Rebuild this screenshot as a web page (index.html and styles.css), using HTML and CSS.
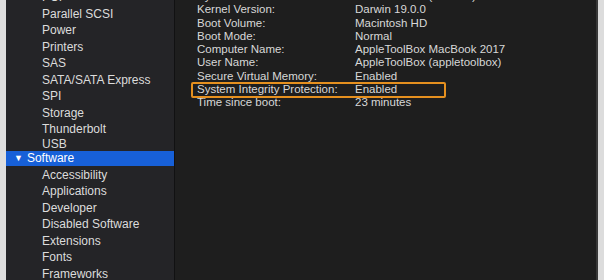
FILE: index.html
```html
<!DOCTYPE html>
<html lang="en">
<head>
    <meta charset="UTF-8">
    <meta name="viewport" content="width=device-width, initial-scale=1.0">
    <title>System Information</title>
    <link rel="stylesheet" href="styles.css">
</head>
<body>
    <div class="window">
        <div class="edge-left"></div>
        <div class="sidebar">
            <ul class="tree">
                <li>PCI</li>
                <li>Parallel SCSI</li>
                <li>Power</li>
                <li>Printers</li>
                <li>SAS</li>
                <li>SATA/SATA Express</li>
                <li>SPI</li>
                <li>Storage</li>
                <li>Thunderbolt</li>
                <li class="short">USB</li>
                <li class="group selected"><span class="arrow">&#9660;</span>Software</li>
                <li>Accessibility</li>
                <li>Applications</li>
                <li>Developer</li>
                <li>Disabled Software</li>
                <li>Extensions</li>
                <li>Fonts</li>
                <li>Frameworks</li>
            </ul>
        </div>
        <div class="content">
            <div class="details">
                <div class="row"><span class="label">System Version:</span><span>macOS 10.15 (19A583)</span></div>
                <div class="row"><span class="label">Kernel Version:</span><span>Darwin 19.0.0</span></div>
                <div class="row"><span class="label">Boot Volume:</span><span>Macintosh HD</span></div>
                <div class="row"><span class="label">Boot Mode:</span><span>Normal</span></div>
                <div class="row"><span class="label">Computer Name:</span><span>AppleToolBox MacBook 2017</span></div>
                <div class="row"><span class="label">User Name:</span><span>AppleToolBox (appletoolbox)</span></div>
                <div class="row"><span class="label">Secure Virtual Memory:</span><span>Enabled</span></div>
                <div class="row marked"><span class="label">System Integrity Protection:</span><span>Enabled</span></div>
                <div class="row"><span class="label">Time since boot:</span><span>23 minutes</span></div>
            </div>
        </div>
        <div class="edge-right"></div>
    </div>
</body>
</html>
```

FILE: styles.css
```css
html, body {
    margin: 0;
    padding: 0;
    background-color: #1e1e1e;
}
body {
    font-family: "Liberation Sans", Arial, sans-serif;
    overflow: hidden;
}
.window {
    display: flex;
    width: 604px;
    height: 280px;
    overflow: hidden;
    background-color: #1e1e1e;
}
.edge-left {
    width: 6px;
    flex-shrink: 0;
    background-color: #dedede;
}
.edge-right {
    width: 6px;
    flex-shrink: 0;
    border-left: 2px solid #383838;
    background-color: #dcdcdc;
}
.sidebar {
    width: 168px;
    flex-shrink: 0;
    background-color: #242427;
    border-right: 1px solid #111112;
}
.tree {
    list-style: none;
    margin: -11px 0 0 0;
    padding: 0;
    font-size: 12px;
    color: #dcdcdc;
}
.tree li {
    height: 16.5px;
    line-height: 16.5px;
    padding-left: 36px;
    white-space: nowrap;
}
.tree li.short {
    height: 13px;
    line-height: 13px;
}
.tree li.group {
    padding-left: 8px;
    height: 15px;
    line-height: 15px;
    margin-bottom: 1px;
}
.tree li.selected {
    background-color: #1760d8;
    color: #ffffff;
}
.arrow {
    display: inline-block;
    font-size: 9px;
    margin-right: 4px;
    vertical-align: top;
}
.content {
    flex-grow: 1;
    padding-left: 22px;
    background-color: #1e1e1e;
}
.details {
    margin-top: -10px;
    font-size: 11.5px;
    color: #d8d8d8;
}
.row {
    display: grid;
    grid-template-columns: 158px auto;
    height: 13.3px;
    line-height: 13.3px;
    white-space: nowrap;
}
.marked {
    position: relative;
}
.marked::after {
    content: "";
    position: absolute;
    left: -6px;
    top: -1px;
    width: 251px;
    height: 12px;
    border: 2px solid #e5901f;
    border-radius: 2px;
}
```
